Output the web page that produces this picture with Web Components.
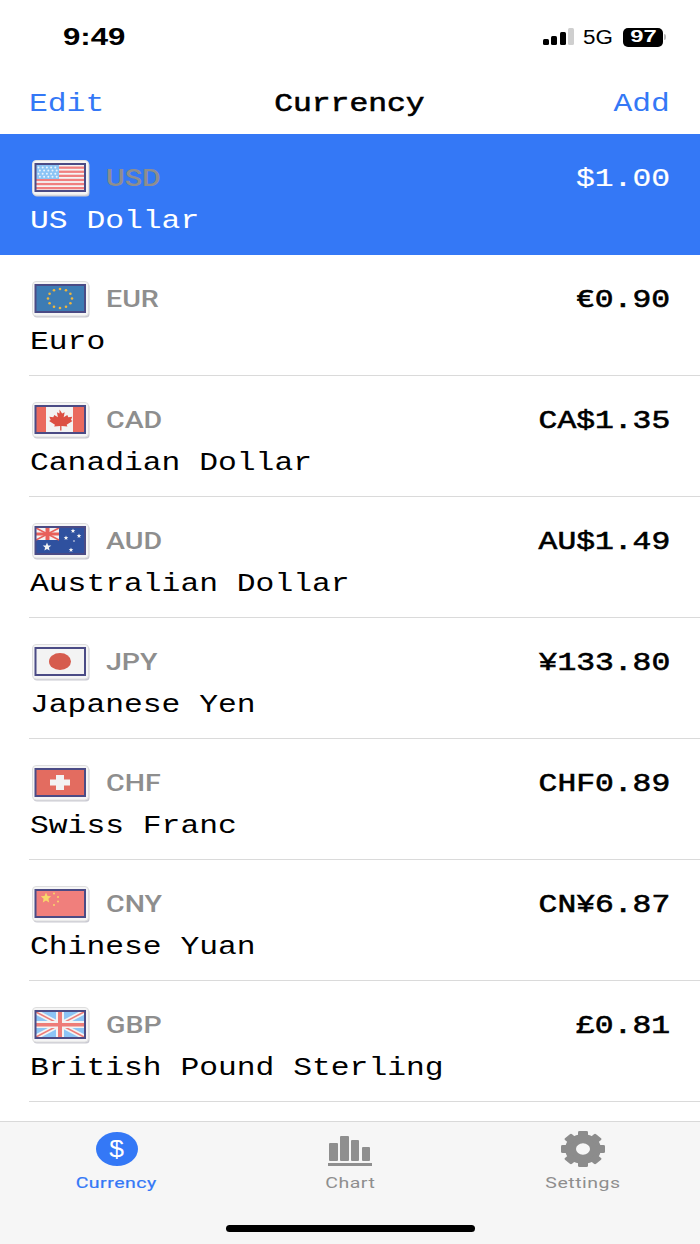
<!DOCTYPE html>
<html>
<head>
<meta charset="utf-8">
<title>Currency</title>
<style>
  html, body { margin: 0; padding: 0; background: #fff; }
</style>
</head>
<body>
<app-screen>
  <status-bar slot="top"></status-bar>
  <nav-bar slot="top" title="Currency"></nav-bar>
  <currency-row code="USD" name="US Dollar" value="$1.00" selected></currency-row>
  <currency-row code="EUR" name="Euro" value="€0.90"></currency-row>
  <currency-row code="CAD" name="Canadian Dollar" value="CA$1.35"></currency-row>
  <currency-row code="AUD" name="Australian Dollar" value="AU$1.49"></currency-row>
  <currency-row code="JPY" name="Japanese Yen" value="¥133.80"></currency-row>
  <currency-row code="CHF" name="Swiss Franc" value="CHF0.89"></currency-row>
  <currency-row code="CNY" name="Chinese Yuan" value="CN¥6.87"></currency-row>
  <currency-row code="GBP" name="British Pound Sterling" value="£0.81"></currency-row>
  <tab-bar slot="bottom"></tab-bar>
</app-screen>

<script>
// the reference is stretched sideways, so text gets widened with a transform
class WideText extends HTMLElement {
  constructor(){
    super();
    this.attachShadow({ mode: 'open' });
    const scale = this.getAttribute('scale') || '1.205';
    const origin = this.getAttribute('origin') || 'left';
    this.shadowRoot.innerHTML = `
      <style>
        :host { display: inline-block; white-space: nowrap; transform: scaleX(${scale}); transform-origin: ${origin} center; }
      </style>
      <slot></slot>`;
  }
}

class AppScreen extends HTMLElement {
  constructor(){
    super();
    this.attachShadow({ mode: 'open' });
    this.shadowRoot.innerHTML = `
      <style>
        :host { display: flex; flex-direction: column; width: 700px; height: 1244px; overflow: hidden; background: #fff; }
        .list { flex: 1; display: flex; flex-direction: column; }
      </style>
      <slot name="top"></slot>
      <div class="list"><slot></slot></div>
      <slot name="bottom"></slot>`;
  }
}

class StatusBar extends HTMLElement {
  constructor(){
    super();
    this.attachShadow({ mode: 'open' });
    this.shadowRoot.innerHTML = `
      <style>
        :host { display: flex; align-items: center; height: 74px; box-sizing: border-box; padding: 0 34px 0 63px; color: #000; font-family: "Liberation Sans", sans-serif; }
        .time { font-size: 24px; font-weight: 700; flex: 1; }
        .right { display: flex; align-items: center; }
        .net { font-size: 20px; margin: 0 10px 0 9px; width: 30px; }
        .battery { width: 40px; height: 19px; background: #000; border-radius: 5px; color: #fff; font-size: 17px; font-weight: 700; display: flex; align-items: center; justify-content: center; }
        .nub { width: 2px; height: 6px; background: #bbb; border-radius: 0 2px 2px 0; margin-left: 1px; }
      </style>
      <div class="time"><wide-text scale="1.3">9:49</wide-text></div>
      <div class="right">
        <svg width="31" height="18" viewBox="0 0 31 18">
          <rect x="0" y="11" width="6" height="6" rx="1.5" fill="#000"/>
          <rect x="8" y="8" width="6" height="9" rx="1.5" fill="#000"/>
          <rect x="17" y="4" width="6" height="13" rx="1.5" fill="#000"/>
          <rect x="25" y="0" width="6" height="17" rx="1.5" fill="#cfcfcf"/>
        </svg>
        <div class="net"><wide-text scale="1.12">5G</wide-text></div>
        <div class="battery"><wide-text scale="1.4" origin="center">97</wide-text></div>
        <div class="nub"></div>
      </div>`;
  }
}

class NavBar extends HTMLElement {
  constructor(){
    super();
    this.attachShadow({ mode: 'open' });
    this.shadowRoot.innerHTML = `
      <style>
        :host { display: grid; grid-template-columns: 1fr auto 1fr; align-items: center; height: 60px; box-sizing: border-box; padding: 0 30px 1px 29px; font: 26px "Liberation Mono", monospace; color: #3478f6; }
        .title { color: #000; -webkit-text-stroke: .6px #000; }
        .add { text-align: right; }
      </style>
      <span><wide-text>Edit</wide-text></span>
      <span class="title"><wide-text origin="center">${this.getAttribute('title')}</wide-text></span>
      <span class="add"><wide-text origin="right">Add</wide-text></span>`;
  }
}

const star = (x, y, r, fill) => {
  let pts = [];
  for (let i = 0; i < 10; i++) {
    const a = i * Math.PI / 5;
    const d = i % 2 ? r * .45 : r;
    pts.push((x + Math.sin(a) * d).toFixed(1) + ',' + (y - Math.cos(a) * d).toFixed(1));
  }
  return `<polygon points="${pts.join(' ')}" fill="${fill}"/>`;
};

const FLAGS = {
  USD: () => {
    let s = '<rect x="3" y="4" width="50" height="27" fill="#f4f4f4"/>';
    for (let i = 0; i < 6; i++) s += `<rect x="4" y="${6.5 + i * 4.1}" width="48" height="2.3" fill="#f07f7f"/>`;
    s += '<rect x="4" y="5" width="23" height="14" fill="#8cc4f5"/>';
    for (let r = 0; r < 4; r++) for (let c = 0; c < 5; c++) s += `<circle cx="${6.5 + c * 4.2 + (r % 2) * 1.4}" cy="${7.5 + r * 3.1}" r="1" fill="#e8f3fc"/>`;
    return s;
  },
  EUR: () => {
    let s = '<rect x="3" y="4" width="50" height="27" fill="#3d7cb4"/>';
    for (let i = 0; i < 12; i++) {
      const a = i * Math.PI / 6;
      s += `<circle cx="${(28 + Math.sin(a) * 12).toFixed(1)}" cy="${(17.5 - Math.cos(a) * 9.5).toFixed(1)}" r="1.3" fill="#f0b63c"/>`;
    }
    return s;
  },
  CAD: () => `<rect x="3" y="4" width="50" height="27" fill="#f3f3f3"/>
    <rect x="4" y="5" width="10" height="25" fill="#ea6a5e"/><rect x="41" y="5" width="11" height="25" fill="#ea6a5e"/>
    <path transform="translate(27.500 18) scale(1.300 1.100) translate(-28 -17.500)" d="M28 8l2 3.500 2-1-.8 4.500 2.800-2 .8 2 3-.5-1 3 1.200.8-4.500 3.500.6 1.700-4.600-.6V27h-1v-4.100l-4.600.6.6-1.700-4.500-3.500 1.200-.8-1-3 3 .5.8-2 2.800 2-.8-4.500 2 1z" fill="#dc4f42"/>`,
  AUD: () => {
    let s = `<rect x="3" y="4" width="50" height="27" fill="#2f519f"/>
      <rect x="4" y="5" width="23" height="12" fill="#f3f3f3"/>
      <path d="M4 5l23 12M27 5L4 17" stroke="#e8605a" stroke-width="1.500"/>
      <rect x="13.500" y="5" width="4" height="12" fill="#e8605a"/><rect x="4" y="9.500" width="23" height="3" fill="#e8605a"/>`;
    s += star(15, 24, 4.5, '#f3f3f3');
    [[41, 8], [34, 15], [47, 13], [39, 27]].forEach(p => { s += star(p[0], p[1], 2.4, '#f3f3f3'); });
    s += '<circle cx="42" cy="18" r=".8" fill="#f3f3f3"/>';
    return s;
  },
  JPY: () => `<rect x="3" y="4" width="50" height="27" fill="#f3f3f3"/><ellipse cx="28" cy="17.500" rx="11" ry="8.500" fill="#d65c4e"/>`,
  CHF: () => `<rect x="3" y="4" width="50" height="27" fill="#e36c60"/>
    <rect x="24" y="10" width="8" height="15" fill="#f3f3f3"/><rect x="18" y="14.500" width="20" height="6" fill="#f3f3f3"/>`,
  CNY: () => `<rect x="3" y="4" width="50" height="27" fill="#f07f7c"/>
    ${star(14, 12, 5.5, '#f8d76a')}
    <circle cx="22" cy="7.500" r="1" fill="#f8d76a"/><circle cx="26" cy="11" r="1" fill="#f8d76a"/>
    <circle cx="26" cy="15.500" r="1" fill="#f8d76a"/><circle cx="22" cy="19" r="1" fill="#f8d76a"/>`,
  GBP: () => `<rect x="3" y="4" width="50" height="27" fill="#8cc4f5"/>
    <path d="M4 5l48 25M52 5L4 30" stroke="#f3f3f3" stroke-width="5"/>
    <path d="M4 5l48 25M52 5L4 30" stroke="#ee7c78" stroke-width="1.500"/>
    <rect x="24" y="5" width="8" height="25" fill="#f3f3f3"/><rect x="4" y="14" width="48" height="7" fill="#f3f3f3"/>
    <rect x="26" y="5" width="4" height="25" fill="#ee7c78"/><rect x="4" y="16" width="48" height="3.500" fill="#ee7c78"/>`
};

class FlagIcon extends HTMLElement {
  constructor(){
    super();
    this.attachShadow({ mode: 'open' });
    const draw = FLAGS[this.getAttribute('code')];
    this.shadowRoot.innerHTML = `
      <style>
        :host { display: block; width: 58px; height: 37px; }
        svg { display: block; }
      </style>
      <svg width="58" height="37" viewBox="0 0 58 37">
        <rect x="1.500" y="2" width="56" height="34.500" rx="3.500" fill="#c9c9d2"/>
        <rect x="0.500" y="0.500" width="56" height="34.500" rx="3.500" fill="#f5f5f5" stroke="#dedede"/>
        ${draw()}
        <rect x="3.500" y="4" width="49.500" height="27" fill="none" stroke="#4b4b85" stroke-width="2"/>
      </svg>`;
  }
}

class CurrencyRow extends HTMLElement {
  constructor(){
    super();
    this.attachShadow({ mode: 'open' });
    const code = this.getAttribute('code');
    this.shadowRoot.innerHTML = `
      <style>
        :host { display: block; height: 121px; box-sizing: border-box; padding-top: 26px; font: 26px "Liberation Mono", monospace; color: #000; position: relative; }
        :host([selected]) { background: #3478f6; color: #fff; }
        :host(:not([selected]))::after { content: ""; position: absolute; left: 29px; right: 0; bottom: 0; height: 1px; background: #dadada; }
        .top { display: flex; align-items: center; height: 37px; padding: 0 30px 0 32px; }
        .code { margin: -2px 0 0 16px; flex: 1; font: 500 24px Roboto, sans-serif; color: #8e8e8e; }
        .value { -webkit-text-stroke: .6px currentColor; }
        :host([selected]) .value { -webkit-text-stroke: .2px currentColor; }
        .name { margin: 6px 0 0 30px; line-height: 36px; }
      </style>
      <div class="top">
        <flag-icon code="${code}"></flag-icon>
        <span class="code"><wide-text scale="1.19">${code}</wide-text></span>
        <span class="value"><wide-text origin="right">${this.getAttribute('value')}</wide-text></span>
      </div>
      <div class="name"><wide-text>${this.getAttribute('name')}</wide-text></div>`;
  }
}

class TabItem extends HTMLElement {
  constructor(){
    super();
    this.attachShadow({ mode: 'open' });
    this.shadowRoot.innerHTML = `
      <style>
        :host { display: flex; flex-direction: column; align-items: center; flex: 1; color: #8e8e8e; font: 15px Roboto, sans-serif; }
        :host([active]) { color: #3478f6; -webkit-text-stroke: .2px #3478f6; }
        .icon { height: 38px; display: flex; align-items: center; justify-content: center; }
        .label { margin-top: 6px; line-height: 18px; letter-spacing: .4px; }
      </style>
      <div class="icon"><slot></slot></div>
      <div class="label"><wide-text scale="1.3" origin="center">${this.getAttribute('label')}</wide-text></div>`;
  }
}

class TabBar extends HTMLElement {
  constructor(){
    super();
    this.attachShadow({ mode: 'open' });
    this.shadowRoot.innerHTML = `
      <style>
        :host { display: block; height: 123px; box-sizing: border-box; background: #f6f6f6; border-top: 1px solid #d9d9d9; position: relative; padding-top: 8px; }
        .items { display: flex; }
        .coin { width: 42px; height: 34px; border-radius: 50%; background: #3478f6; color: #fff; -webkit-text-stroke: 0; display: flex; align-items: center; justify-content: center; font: 500 24px "Liberation Sans", sans-serif; }
        .home { position: absolute; left: 226px; width: 249px; bottom: 12px; height: 7px; border-radius: 4px; background: #000; }
      </style>
      <div class="items">
        <tab-item label="Currency" active><div class="coin"><wide-text scale="1.1" origin="center">$</wide-text></div></tab-item>
        <tab-item label="Chart">
          <svg width="44" height="34" viewBox="0 0 44 34">
            <rect x="1" y="11" width="9" height="18" rx="1" fill="#8f8f8f"/>
            <rect x="12" y="4" width="9" height="25" rx="1" fill="#8f8f8f"/>
            <rect x="23" y="8" width="8" height="21" rx="1" fill="#8f8f8f"/>
            <rect x="34" y="15" width="8" height="14" rx="1" fill="#8f8f8f"/>
            <rect x="0" y="31" width="44" height="3" fill="#8f8f8f"/>
          </svg>
        </tab-item>
        <tab-item label="Settings">
          <svg width="44" height="36" viewBox="-22 -22 44 44" preserveAspectRatio="none">
            <circle r="12.500" fill="none" stroke="#8c8c8c" stroke-width="11"/>
            <g fill="#8c8c8c">
              <rect x="-5" y="-22" width="10" height="9" rx="1.500"/>
              <rect x="-5" y="-22" width="10" height="9" rx="1.500" transform="rotate(45)"/>
              <rect x="-5" y="-22" width="10" height="9" rx="1.500" transform="rotate(90)"/>
              <rect x="-5" y="-22" width="10" height="9" rx="1.500" transform="rotate(135)"/>
              <rect x="-5" y="-22" width="10" height="9" rx="1.500" transform="rotate(180)"/>
              <rect x="-5" y="-22" width="10" height="9" rx="1.500" transform="rotate(225)"/>
              <rect x="-5" y="-22" width="10" height="9" rx="1.500" transform="rotate(270)"/>
              <rect x="-5" y="-22" width="10" height="9" rx="1.500" transform="rotate(315)"/>
            </g>
          </svg>
        </tab-item>
      </div>
      <div class="home"></div>`;
  }
}

customElements.define('wide-text', WideText);
customElements.define('flag-icon', FlagIcon);
customElements.define('status-bar', StatusBar);
customElements.define('nav-bar', NavBar);
customElements.define('currency-row', CurrencyRow);
customElements.define('tab-item', TabItem);
customElements.define('tab-bar', TabBar);
customElements.define('app-screen', AppScreen);
</script>
</body>
</html>
